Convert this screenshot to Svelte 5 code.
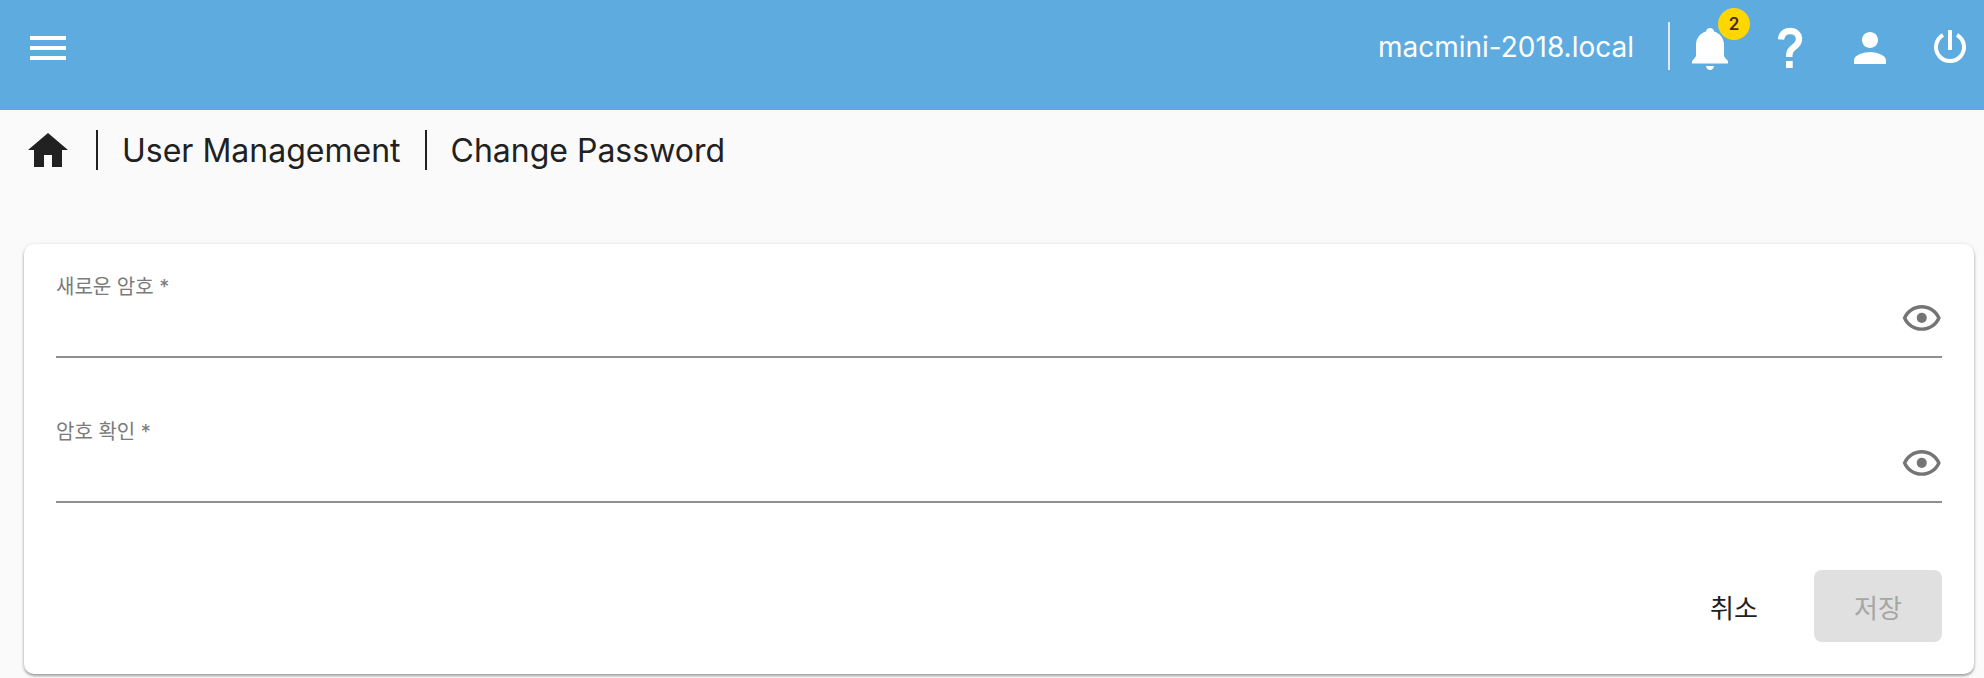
<script>
  const fields = ["새로운 암호 *", "암호 확인 *"];
</script>

<div class="page">
  <header class="topbar">
    <button class="icon-btn" aria-label="menu">
      <svg viewBox="0 0 24 24" width="48" height="48"><path d="M3 18h18v-2H3v2zm0-5h18v-2H3v2zm0-7v2h18V6H3z" /></svg>
    </button>
    <div class="spacer"></div>
    <span class="host">macmini-2018.local</span>
    <span class="vline"></span>
    <div class="icons">
      <div class="icon-btn bell">
        <svg viewBox="0 0 48 48" width="48" height="48"><path d="M24 4c2.200 0 3.800 1.400 4 3.600C34 9.500 38 14.500 38 21v10c0 2 1.500 3.600 4 6v2.500H6V37c2.500-2.400 4-4 4-6V21c0-6.500 4-11.500 10-13.400C20.200 5.400 21.800 4 24 4zM20 42h8c-.4 2.600-2 4-4 4s-3.600-1.400-4-4z" /></svg>
        <span class="badge">2</span>
      </div>
      <button class="icon-btn" aria-label="help">
        <svg viewBox="0 0 48 48" width="48" height="48"><path class="line q" d="M15 15.500C15.500 10 19 7 24 7c5.500 0 9 3.500 9 8 0 4-2 6-5.500 8.500-3 2.200-4.200 4-4.200 7.500v2" /><path d="M20 37h6.700v7H20z" /></svg>
      </button>
      <button class="icon-btn" aria-label="account">
        <svg viewBox="0 0 24 24" width="48" height="48"><path d="M12 12c2.210 0 4-1.790 4-4s-1.790-4-4-4-4 1.790-4 4 1.790 4 4 4zm0 2c-2.670 0-8 1.340-8 4v2h16v-2c0-2.660-5.330-4-8-4z" /></svg>
      </button>
      <button class="icon-btn" aria-label="power">
        <svg viewBox="0 0 48 48" width="48" height="48"><path d="M22 6h4v20h-4z" /><path class="line" d="M17 11a14 14 0 1 0 14 0" /></svg>
      </button>
    </div>
  </header>

  <nav class="crumbs">
    <svg class="home" viewBox="0 0 40 34" width="40" height="34"><path d="M20 0 40 17h-6v17H24V22h-8v12H6V17H0z" /></svg>
    <span class="sep"></span>
    <span>User Management</span>
    <span class="sep"></span>
    <span>Change Password</span>
  </nav>

  <main class="card">
    {#each fields as label}
      <div class="field">
        <label>{label}</label>
        <div class="input-row">
          <svg class="eye" viewBox="0 0 24 24" width="41.500" height="41.500"><path d="M12 6c3.790 0 7.170 2.130 8.820 5.500C19.170 14.870 15.790 17 12 17s-7.170-2.130-8.820-5.500C4.830 8.130 8.210 6 12 6m0-2C7 4 2.730 7.110 1 11.500 2.730 15.890 7 19 12 19s9.270-3.110 11-7.500C21.270 7.110 17 4 12 4z" /><circle cx="12" cy="11.500" r="2.900" /></svg>
        </div>
      </div>
    {/each}
    <div class="actions">
      <button class="btn cancel">취소</button>
      <button class="btn save" disabled>저장</button>
    </div>
  </main>
</div>

<style>
  :global(body) {
    margin: 0;
    background: #fafafa;
  }
  .page {
    height: 678px;
    overflow: hidden;
    font-family: Inter, "Noto Sans CJK KR", sans-serif;
    color: #212121;
  }
  .topbar {
    height: 110px;
    background: #5dabdf;
    display: flex;
    align-items: center;
    padding: 0 10px 14px 24px;
    box-sizing: border-box;
  }
  .icon-btn {
    border: 0;
    padding: 0;
    background: none;
    width: 48px;
    height: 48px;
    display: flex;
    fill: #fff;
  }
  .line {
    fill: none;
    stroke: #fff;
    stroke-width: 4;
  }
  .q {
    stroke-width: 6.400;
  }
  .spacer {
    flex: 1;
  }
  .host {
    color: #fff;
    font-size: 28px;
    margin-right: 34px;
    margin-bottom: 2px;
  }
  .vline {
    width: 2px;
    height: 48px;
    background: #dfe9f1;
    margin-right: 16px;
    margin-bottom: 4px;
  }
  .icons {
    display: flex;
    gap: 32px;
  }
  .bell {
    position: relative;
  }
  .badge {
    position: absolute;
    left: 32px;
    top: -16px;
    width: 32px;
    height: 32px;
    border-radius: 50%;
    background: #ffd600;
    color: #4a2a1a;
    font-size: 17px;
    font-weight: 600;
    display: flex;
    align-items: center;
    justify-content: center;
  }
  .crumbs {
    height: 80px;
    display: flex;
    align-items: center;
    gap: 24px;
    padding-left: 28px;
    font-size: 32px;
    color: #212121;
  }
  .home {
    fill: #212121;
    margin-right: 4px;
  }
  .sep {
    width: 2px;
    height: 40px;
    background: #212121;
  }
  .card {
    margin: 54px 10px 0 24px;
    height: 430px;
    background: #fff;
    border-radius: 10px;
    padding: 0 32px;
    box-sizing: border-box;
    box-shadow: 0 2px 3px rgba(0, 0, 0, 0.35), 0 0 4px rgba(0, 0, 0, 0.08);
  }
  .field {
    height: 145px;
    box-sizing: border-box;
    padding-top: 31px;
  }
  .field label {
    display: block;
    font-size: 20px;
    line-height: 24px;
    color: #7b7b7b;
  }
  .input-row {
    height: 54px;
    margin-top: 3px;
    border-bottom: 2px solid #8f8f8f;
    display: flex;
    justify-content: flex-end;
    align-items: flex-start;
  }
  .eye {
    fill: #757575;
    margin-top: -4px;
  }
  .actions {
    display: flex;
    justify-content: flex-end;
    gap: 16px;
    margin-top: 36px;
  }
  .btn {
    width: 128px;
    height: 72px;
    border: 0;
    border-radius: 8px;
    font-family: inherit;
    font-size: 26px;
    background: none;
    color: #212121;
  }
  .save {
    background: #e0e0e0;
    color: #a6a6a6;
  }
</style>
